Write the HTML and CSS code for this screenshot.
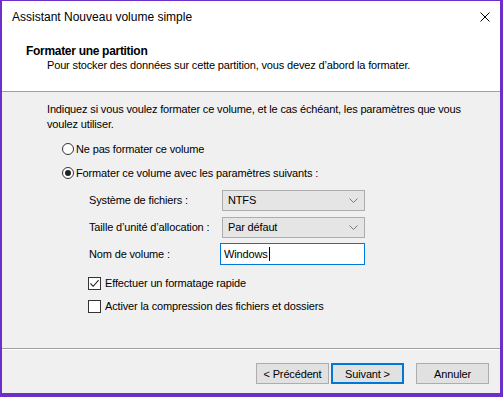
FILE: index.html
```html
<!DOCTYPE html>
<html lang="fr">
<head>
  <meta charset="UTF-8" />
  <title>Assistant Nouveau volume simple</title>
  <link rel="stylesheet" href="styles.css">
</head>
<body>
  <div class="window">
    <div class="titlebar">
      <span class="title">Assistant Nouveau volume simple</span>
      <svg class="close" width="10" height="10" viewBox="0 0 10 10">
        <path d="M0.5 0.5 L9.5 9.5 M9.5 0.5 L0.5 9.5" stroke="#000" stroke-width="1" fill="none"/>
      </svg>
    </div>

    <div class="header">
      <h1>Formater une partition</h1>
      <p>Pour stocker des données sur cette partition, vous devez d’abord la formater.</p>
    </div>

    <div class="content">
      <p class="intro">Indiquez si vous voulez formater ce volume, et le cas échéant, les paramètres que vous<br>voulez utiliser.</p>

      <div class="option">
        <span class="radio"></span>
        <span>Ne pas formater ce volume</span>
      </div>
      <div class="option">
        <span class="radio checked"></span>
        <span>Formater ce volume avec les paramètres suivants :</span>
      </div>

      <div class="fields">
        <span class="field-label">Système de fichiers :</span>
        <div class="combo">
          <span>NTFS</span>
          <svg width="9" height="5" viewBox="0 0 9 5"><path d="M0.5 0.5 L4.5 4.5 L8.5 0.5" stroke="#777" fill="none"/></svg>
        </div>

        <span class="field-label">Taille d’unité d’allocation :</span>
        <div class="combo">
          <span>Par défaut</span>
          <svg width="9" height="5" viewBox="0 0 9 5"><path d="M0.5 0.5 L4.5 4.5 L8.5 0.5" stroke="#777" fill="none"/></svg>
        </div>

        <span class="field-label">Nom de volume :</span>
        <div class="textbox">Windows<span class="caret"></span></div>
      </div>

      <div class="checks">
        <div class="option">
          <span class="checkbox">
            <svg width="11" height="11" viewBox="0 0 11 11"><path d="M1.5 5.5 L4.2 8.3 L9.6 2.2" stroke="#222" stroke-width="1.1" fill="none"/></svg>
          </span>
          <span>Effectuer un formatage rapide</span>
        </div>
        <div class="option">
          <span class="checkbox"></span>
          <span>Activer la compression des fichiers et dossiers</span>
        </div>
      </div>
    </div>

    <div class="footer">
      <button class="btn">&lt; Précédent</button>
      <button class="btn default">Suivant &gt;</button>
      <button class="btn cancel">Annuler</button>
    </div>
  </div>
</body>
</html>
```

FILE: styles.css
```css
body {
  margin: 0;
  font-family: "Liberation Sans", Arial, sans-serif;
  font-size: 11px;
  letter-spacing: -0.15px;
  color: #000;
  background: #6c2fc9;
}
.window {
  box-sizing: border-box;
  width: 503px;
  height: 397px;
  border-style: solid;
  border-color: #6c2fc9;
  border-width: 1px 3px 4px 2px;
  background: #f0f0f0;
  display: flex;
  flex-direction: column;
}
.titlebar {
  height: 31px;
  background: #fff;
  display: flex;
  align-items: center;
  justify-content: space-between;
  padding: 0 10px 0 10px;
}
.title {
  font-size: 12px;
  letter-spacing: 0;
}
.header {
  background: #fff;
  padding: 12px 0 0 24px;
  height: 60px;
  box-sizing: border-box;
  border-bottom: 1px solid #a0a0a0;
}
.header h1 {
  margin: 0;
  font-size: 12px;
  font-weight: bold;
  letter-spacing: -0.3px;
  line-height: 14px;
}
.header p {
  margin: 0;
  padding-left: 21px;
  line-height: 14px;
}
.content {
  flex: 1;
  padding: 10px 0 0 45px;
}
.intro {
  margin: 0 0 9px 0;
  line-height: 15px;
}
.option {
  display: flex;
  align-items: center;
  gap: 2px;
  height: 16px;
  margin-bottom: 8px;
}
.content > .option {
  padding-left: 15px;
}
.radio {
  box-sizing: border-box;
  width: 12px;
  height: 12px;
  border: 1px solid #333;
  border-radius: 50%;
  background: #fff;
  display: flex;
  align-items: center;
  justify-content: center;
}
.radio.checked::after {
  content: "";
  width: 6px;
  height: 6px;
  border-radius: 50%;
  background: #222;
}
.fields {
  display: grid;
  grid-template-columns: 133px 143px;
  grid-auto-rows: 22px;
  row-gap: 5px;
  align-items: center;
  padding-left: 42px;
}
.combo {
  box-sizing: border-box;
  height: 21px;
  border: 1px solid #adadad;
  background: #e5e5e5;
  display: flex;
  align-items: center;
  justify-content: space-between;
  padding: 0 6px 0 5px;
}
.textbox {
  box-sizing: border-box;
  height: 22px;
  margin-left: -2px;
  width: 145px;
  border: 1px solid #0078d7;
  background: #fff;
  display: flex;
  align-items: center;
  padding-left: 3px;
}
.caret {
  width: 1px;
  height: 14px;
  background: #000;
  margin-left: 1px;
}
.checks {
  padding-left: 41px;
  margin-top: 10px;
}
.checks .option {
  margin-bottom: 7px;
}
.checkbox {
  box-sizing: border-box;
  width: 13px;
  height: 13px;
  border: 1px solid #333;
  background: #fff;
  display: flex;
  align-items: center;
  justify-content: center;
  margin-right: 2px;
}
.footer {
  height: 45px;
  box-sizing: border-box;
  border-top: 1px solid #a0a0a0;
  box-shadow: inset 0 1px #fff;
  display: flex;
  justify-content: flex-end;
  align-items: flex-start;
  padding: 14px 11px 0 0;
  gap: 2px;
}
.btn {
  box-sizing: border-box;
  width: 73px;
  height: 21px;
  border: 1px solid #adadad;
  background: #e1e1e1;
  font-family: "Liberation Sans", Arial, sans-serif;
  font-size: 11px;
  letter-spacing: -0.15px;
  color: #000;
  padding: 0;
}
.btn.default {
  border: 2px solid #0078d7;
}
.btn.cancel {
  margin-left: 10px;
}
```
